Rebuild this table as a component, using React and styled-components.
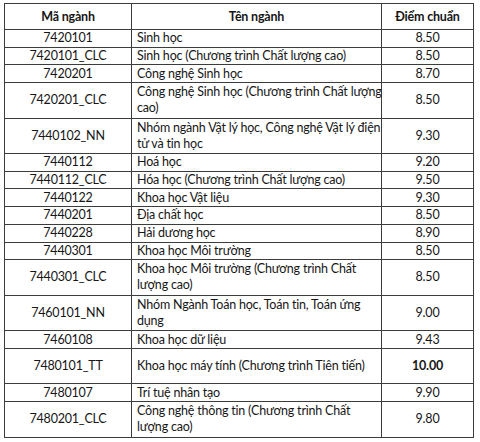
import React from 'react'
import styled, { createGlobalStyle } from 'styled-components'

const GlobalStyle = createGlobalStyle`
	body {
		margin: 0;
		background: #fff;
		font-family: Lato, "Noto Sans", sans-serif;
		color: #161616;
	}
`

const Page = styled.div`
	padding: 3px 0 0 4px;
`

const Table = styled.div`
	width: 470px;
	border: 1px solid #3c3c3c;
	border-bottom: none;
	box-sizing: border-box;
`

const Row = styled.div`
	display: grid;
	grid-template-columns: 127px 250px 91px;
	height: ${p => p.h}px;
	border-bottom: 1px solid #3c3c3c;
	box-sizing: border-box;
`

const Cell = styled.div`
	display: flex;
	flex-direction: column;
	justify-content: center;
	align-items: ${p => (p.left ? 'flex-start' : 'center')};
	padding: ${p => (p.left ? '0 0 0 5px' : '0')};
	border-right: ${p => (p.last ? 'none' : '1px solid #3c3c3c')};
	font-size: 12.5px;
	letter-spacing: -0.2px;
	line-height: 16px;
	font-weight: ${p => (p.bold ? 700 : 400)};
	white-space: nowrap;
`

const rows = [
	['7420101', ['Sinh học'], '8.50'],
	['7420101_CLC', ['Sinh học (Chương trình Chất lượng cao)'], '8.50'],
	['7420201', ['Công nghệ Sinh học'], '8.70'],
	['7420201_CLC', ['Công nghệ Sinh học (Chương trình Chất lượng', 'cao)'], '8.50'],
	['7440102_NN', ['Nhóm ngành Vật lý học, Công nghệ Vật lý điện', 'tử và tin học'], '9.30'],
	['7440112', ['Hoá học'], '9.20'],
	['7440112_CLC', ['Hóa học (Chương trình Chất lượng cao)'], '9.50'],
	['7440122', ['Khoa học Vật liệu'], '9.30'],
	['7440201', ['Địa chất học'], '8.50'],
	['7440228', ['Hải dương học'], '8.90'],
	['7440301', ['Khoa học Môi trường'], '8.50'],
	['7440301_CLC', ['Khoa học Môi trường (Chương trình Chất', 'lượng cao)'], '8.50'],
	['7460101_NN', ['Nhóm Ngành Toán học, Toán tin, Toán ứng', 'dụng'], '9.00'],
	['7460108', ['Khoa học dữ liệu'], '9.43'],
	['7480101_TT', ['Khoa học máy tính (Chương trình Tiên tiến)'], '10.00', true],
	['7480107', ['Trí tuệ nhân tạo'], '9.90'],
	['7480201_CLC', ['Công nghệ thông tin (Chương trình Chất', 'lượng cao)'], '9.80'],
]

const App = () => {
	return (
		<Page>
			<GlobalStyle />
			<Table>
				<Row h={26}>
					<Cell bold>Mã ngành</Cell>
					<Cell bold>Tên ngành</Cell>
					<Cell bold last>Điểm chuẩn</Cell>
				</Row>
				{rows.map(([code, name, score, tall]) => {
					const big = name.length > 1 || tall
					return (
						<Row key={code} h={big ? 35.5 : 17.7}>
							<Cell>{code}</Cell>
							<Cell left>
								{name.map(line => <span key={line}>{line}</span>)}
							</Cell>
							<Cell last bold={code === '7480101_TT'}>{score}</Cell>
						</Row>
					)
				})}
			</Table>
		</Page>
	)
}

export default App
